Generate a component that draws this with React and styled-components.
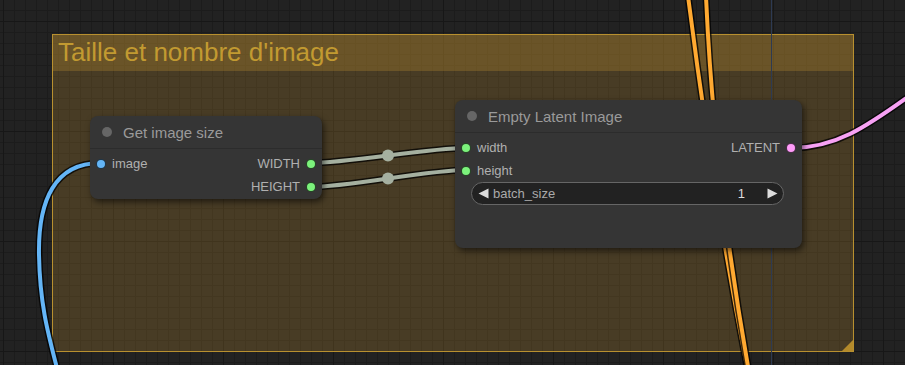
import React from "react";
import styled, { createGlobalStyle } from "styled-components";

const Global = createGlobalStyle`
  html, body { margin: 0; padding: 0; background: #222; }
  body { font-family: "Liberation Sans", Arial, sans-serif; }
`;

const Canvas = styled.div`
  position: relative;
  width: 905px;
  height: 365px;
  overflow: hidden;
  background-color: #222222;
  background-image:
    linear-gradient(to right, #171717 1px, transparent 1px),
    linear-gradient(to bottom, #171717 1px, transparent 1px),
    linear-gradient(to right, #1c1c1c 1px, transparent 1px),
    linear-gradient(to bottom, #1c1c1c 1px, transparent 1px);
  background-size: 110px 100%, 100% 110px, 11px 100%, 100% 11px;
  background-position: 3px 0, 0 21px, 3px 0, 0 10px;
  font-family: "Liberation Sans", Arial, sans-serif;
`;

const Group = styled.div`
  position: absolute;
  left: ${(p) => p.$x}px;
  top: ${(p) => p.$y}px;
  width: ${(p) => p.$w}px;
  height: ${(p) => p.$h}px;
  box-sizing: border-box;
  border: 1px solid #b8902f;
  background: rgba(180, 136, 46, 0.26);
  display: flex;
  flex-direction: column;
`;

const GroupTitle = styled.div`
  height: 36px;
  line-height: 34px;
  padding-left: 5px;
  font-size: 26px;
  color: #c29a31;
  background: rgba(180, 136, 46, 0.32);
  white-space: nowrap;
`;

const ResizeCorner = styled.div`
  position: absolute;
  right: 0;
  bottom: 0;
  width: 0;
  height: 0;
  border-style: solid;
  border-width: 0 0 11px 11px;
  border-color: transparent transparent #b38a2b transparent;
`;

const Links = styled.svg`
  position: absolute;
  left: 0;
  top: 0;
  pointer-events: none;
`;

const Node = styled.div`
  position: absolute;
  left: ${(p) => p.$x}px;
  top: ${(p) => p.$y}px;
  width: ${(p) => p.$w}px;
  height: ${(p) => p.$h}px;
  box-sizing: border-box;
  background: #353535;
  border-radius: 8px;
  box-shadow: 2px 3px 6px rgba(0, 0, 0, 0.55);
  display: flex;
  flex-direction: column;
`;

const NodeTitle = styled.div`
  display: flex;
  align-items: center;
  gap: 11px;
  height: 32px;
  padding-left: 12px;
  border-bottom: 1px solid #2c2c2c;
  font-size: 15px;
  color: #9a9a9a;
  white-space: nowrap;
`;

const TitleDot = styled.span`
  width: 10px;
  height: 10px;
  border-radius: 50%;
  background: #666;
`;

const NodeBody = styled.div`
  padding-top: 3px;
  display: flex;
  flex-direction: column;
`;

const Row = styled.div`
  display: flex;
  align-items: center;
  justify-content: space-between;
  height: 23px;
`;

const Slot = styled.div`
  display: flex;
  align-items: center;
  gap: 6px;
  font-size: 13px;
  color: #b0b0b0;
  padding: ${(p) => (p.$out ? "0 6px 0 0" : "0 0 0 6px")};
  white-space: nowrap;
`;

const Dot = styled.span`
  width: 10px;
  height: 10px;
  box-sizing: border-box;
  border-radius: 50%;
  background: ${(p) => p.$color};
  border: 1px solid rgba(0, 0, 0, 0.7);
`;

const WidgetRow = styled.div`
  height: 23px;
  padding: 0 18px 0 16px;
  display: flex;
`;

const Widget = styled.div`
  flex: 1;
  box-sizing: border-box;
  height: 23px;
  border: 1px solid #666;
  border-radius: 12px;
  background: #222;
  display: flex;
  align-items: center;
  padding: 0 5px 0 6px;
  font-size: 13px;
`;

const WidgetLabel = styled.span`
  flex: 1;
  margin-left: 4px;
  color: #aaa;
`;

const WidgetValue = styled.span`
  margin-right: 22px;
  color: #ddd;
`;

const Arrow = ({ dir }) => (
  <svg width="11" height="11" viewBox="0 0 11 11">
    {dir === "left" ? (
      <polygon points="10.5,0.5 10.5,10.5 0.5,5.5" fill="#ddd" />
    ) : (
      <polygon points="0.5,0.5 0.5,10.5 10.5,5.5" fill="#ddd" />
    )}
  </svg>
);

const Link = ({ d, color, w = 4 }) => (
  <g>
    <path d={d} fill="none" stroke="rgba(0,0,0,0.75)" strokeWidth={w + 3} strokeLinecap="round" />
    <path d={d} fill="none" stroke={color} strokeWidth={w} strokeLinecap="round" />
  </g>
);

export default function App() {
  const gray = "#a5b0a0";
  return (
    <>
      <Global />
      <Canvas>
        <Group $x={52} $y={34} $w={802} $h={318}>
          <GroupTitle>Taille et nombre d'image</GroupTitle>
          <ResizeCorner />
        </Group>

        <Links width="905" height="365" viewBox="0 0 905 365">
          <line x1="771.5" y1="0" x2="771.5" y2="365" stroke="#2d3a52" strokeWidth="1" />
          <Link d="M688,-4 C700,90 720,230 748,372" color="#ffa931" />
          <Link d="M706,-4 C710,90 722,220 749,372" color="#ffa931" />
          <Link d="M100,163 C55,163 38,200 39,255 S50,340 60,380" color="#64b5f6" />
          <Link d="M791,148 C835,148 865,128 912,94" color="#f7a1f4" />
          <Link d="M310,163 C349,163 427,148 466,148" color={gray} />
          <Link d="M310,187 C349,187 427,170 466,170" color={gray} />
          <circle cx="388" cy="155.5" r="6" fill={gray} />
          <circle cx="388" cy="178.5" r="6" fill={gray} />
        </Links>

        <Node $x={90} $y={116} $w={232} $h={83}>
          <NodeTitle>
            <TitleDot />
            Get image size
          </NodeTitle>
          <NodeBody>
            <Row>
              <Slot>
                <Dot $color="#64b5f6" />
                image
              </Slot>
              <Slot $out>
                WIDTH
                <Dot $color="#7cf27c" />
              </Slot>
            </Row>
            <Row>
              <span />
              <Slot $out>
                HEIGHT
                <Dot $color="#7cf27c" />
              </Slot>
            </Row>
          </NodeBody>
        </Node>

        <Node $x={455} $y={100} $w={347} $h={148}>
          <NodeTitle>
            <TitleDot />
            Empty Latent Image
          </NodeTitle>
          <NodeBody>
            <Row>
              <Slot>
                <Dot $color="#7cf27c" />
                width
              </Slot>
              <Slot $out>
                LATENT
                <Dot $color="#ff9cf9" />
              </Slot>
            </Row>
            <Row>
              <Slot>
                <Dot $color="#7cf27c" />
                height
              </Slot>
            </Row>
            <WidgetRow>
              <Widget>
                <Arrow dir="left" />
                <WidgetLabel>batch_size</WidgetLabel>
                <WidgetValue>1</WidgetValue>
                <Arrow dir="right" />
              </Widget>
            </WidgetRow>
          </NodeBody>
        </Node>
      </Canvas>
    </>
  );
}
